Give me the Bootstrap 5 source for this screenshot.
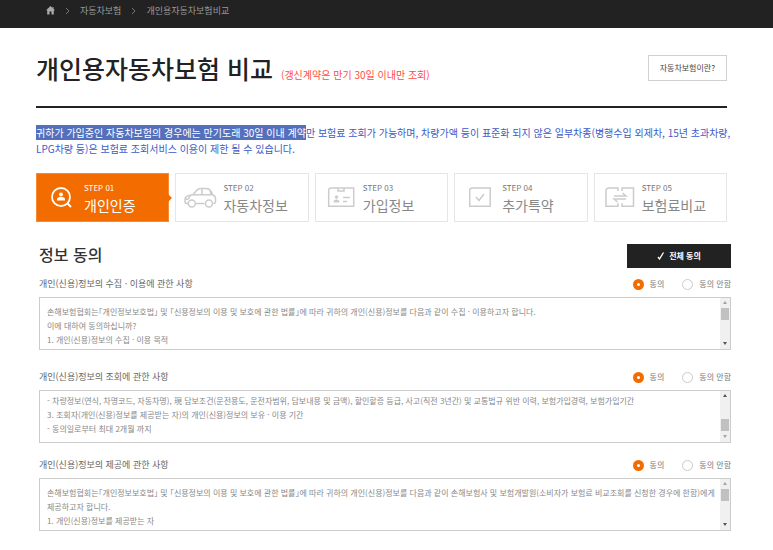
<!DOCTYPE html>
<html lang="ko">
<head>
<meta charset="utf-8">
<meta name="viewport" content="width=device-width, initial-scale=1">
<title>개인용자동차보험 비교</title>
<link href="https://cdn.jsdelivr.net/npm/bootstrap@5.3.0/dist/css/bootstrap.min.css" rel="stylesheet">
<style>
body{font-family:"Noto Sans CJK KR",sans-serif;font-size:8px;line-height:14px;color:#888;background:#fff}
a{text-decoration:none}
.topbar{background:#222;height:28px;padding:0 46px 7px;font-size:9px}
.topbar a{color:#999}
.topbar ol{gap:10px}
.page-main{padding:0 46px 0 36px}
.title-row{height:80px;border-bottom:2px solid #222;padding-top:2px}
.title-row h1{font-size:25px;line-height:40px;font-weight:500;color:#222}
.title-note{font-size:10px;color:#ff4b43}
.about-btn{border:1px solid #d0d0d0;border-radius:0;font-size:8px;line-height:14px;color:#444;padding:5px 11px}
.notice{font-size:10px;line-height:16px;color:#3c5bc8;margin:17px -6px 16px 0;word-break:keep-all}
.notice mark{background:#5470bd;color:#fff;padding:0}
.steps{gap:6px}
.step{height:49px;border:1px solid #e6e6e6;color:#888;position:relative}
.step svg{width:36px;height:24px;flex:none;fill:none;stroke:#ccc;stroke-width:1.5}
.step{padding:0 6px 0 7px;gap:4px}
.step small{font-size:8px;line-height:14px;color:#777}
.step strong{font-size:14px;line-height:20px;font-weight:400;white-space:nowrap}
.step.current{background:#f26c00;border-color:#f58b36;color:#fff}
.step.current small{color:#fff}
.step.current svg{stroke:#fff}
.step.current::after{content:"";position:absolute;left:100%;top:50%;margin-top:-4px;border:4px solid transparent;border-left-color:#f26c00;border-right:0}
.agreements{padding:22px 0 0 3px;margin-right:-4px}
.agreements h2{font-size:16px;line-height:20px;font-weight:500;color:#333}
.all-btn{width:104px;height:24px;background:#222;color:#fff;border:0;border-radius:0;font-size:8px;line-height:14px;font-weight:700;padding:0}
.all-btn:hover{background:#000;color:#fff}
.consent{margin-bottom:18px}
.consent:first-of-type{margin-top:7px}
.consent-scrolled{margin-bottom:13px}
.consent-head{height:18px;margin-bottom:4px}
.consent-head h3{font-size:9px;line-height:14px;font-weight:400;color:#666}
.choices{gap:18px}
.choices label{gap:6px;color:#777}
.choices input{appearance:none;width:11px;height:11px;margin:0;border:1px solid #ccc;border-radius:50%;background:#fff}
.choices input:checked{border:4px solid #f26c00}
.terms{height:53px;border:1px solid #ccc;overflow:hidden}
.terms-text{padding:7px 0 0 7px;height:51px;overflow:hidden;color:#888;font-feature-settings:"halt"}
.consent-scrolled .terms-text{padding-top:3px}
.scroll{width:10px;background:#f0f0f0;padding:3px 1px 4px;flex:none}
.scroll i{display:block;border:2px solid transparent;border-top:0;border-bottom:3px solid #555;width:4px}
.scroll i:last-child{border-top:3px solid #555;border-bottom:0}
.scroll b{display:block;width:8px;height:12px;background:#c1c1c1}
.scroll .idle{opacity:.5}
</style>
<script src="https://cdn.jsdelivr.net/npm/bootstrap@5.3.0/dist/js/bootstrap.bundle.min.js"></script>
</head>
<body>
<nav class="topbar d-flex align-items-center" aria-label="경로">
  <ol class="list-unstyled d-flex align-items-center m-0">
    <li class="d-flex"><a href="#" class="d-flex" aria-label="홈"><svg width="9" height="9" viewBox="0 0 9 9" fill="#aaa"><path d="M4.500 0 0 4.300h1.200V8.500h2.300V5.500h2v3h2.300V4.300H9L7.500 2.800V1h-1v.9z"/></svg></a></li>
    <li class="d-flex"><svg width="5" height="8" viewBox="0 0 5 8" fill="none" stroke="#777"><path d="m1 1 3 3-3 3"/></svg></li>
    <li><a href="#">자동차보험</a></li>
    <li class="d-flex"><svg width="5" height="8" viewBox="0 0 5 8" fill="none" stroke="#777"><path d="m1 1 3 3-3 3"/></svg></li>
    <li><a href="#">개인용자동차보험비교</a></li>
  </ol>
</nav>
<main class="page-main">
  <header class="title-row d-flex align-items-center justify-content-between">
    <div class="d-flex align-items-baseline">
      <h1 class="m-0">개인용자동차보험 비교</h1>
      <span class="title-note ms-2">(갱신계약은 만기 30일 이내만 조회)</span>
    </div>
    <button type="button" class="btn about-btn">자동차보험이란?</button>
  </header>
  <p class="notice"><mark>귀하가 가입중인 자동차보험의 경우에는 만기도래 30일 이내 계약</mark>만 보험료 조회가 가능하며, 차량가액 등이 표준화 되지 않은 일부차종(병행수입 외제차, 15년 초과차량, LPG차량 등)은 보험료 조회서비스 이용이 제한 될 수 있습니다.</p>

  <ol class="steps list-unstyled d-flex m-0">
    <li class="step current col d-flex align-items-center">
      <svg viewBox="0 0 36 24"><circle cx="17" cy="11" r="9" stroke-width="1.800"/><path d="m23 17 4 4" stroke-width="2"/><circle cx="17" cy="8.500" r="2" fill="#fff" stroke="none"/><path d="M13 14.500v-1c0-2 1.500-2.500 4-2.500s4 .5 4 2.500v1z" fill="#fff" stroke="none"/></svg>
      <div class="d-flex flex-column"><small>STEP 01</small><strong>개인인증</strong></div>
    </li>
    <li class="step col d-flex align-items-center">
      <svg viewBox="0 0 36 24"><path d="M5 17.500H3.500Q2 17.500 2 15.500v-2q0-3 4-4l4-.8 3.500-4.200Q15 2.500 18 2.500h5q3 0 4.500 2L30 9q2.500 1 2.500 4v2.500q0 2-2 2M12.500 17.500h9M10 8.700h20M19 2.500v6M27 3.500l1 5M3 13q3 1 4-3"/><circle cx="8.800" cy="17.500" r="3.500"/><circle cx="26" cy="17.500" r="3.500"/></svg>
      <div class="d-flex flex-column"><small>STEP 02</small><strong>자동차정보</strong></div>
    </li>
    <li class="step col d-flex align-items-center">
      <svg viewBox="0 0 36 24"><path d="M5.700 20.300V4.500q0-2.500 2.500-2.500h22.500v18.300zM15 2v3h6V2M20 11.500h7M20 15.500h4"/><circle cx="13.500" cy="11" r="1.700" fill="#ccc" stroke="none"/><path d="M10.500 16.500q0-3 3-3t3 3z" fill="#ccc" stroke="none"/></svg>
      <div class="d-flex flex-column"><small>STEP 03</small><strong>가입정보</strong></div>
    </li>
    <li class="step col d-flex align-items-center">
      <svg viewBox="0 0 36 24"><path d="M7.700 20.300V4.500q0-2.500 2.500-2.500h18v18.300zM14 11l3 3.500L22 8"/></svg>
      <div class="d-flex flex-column"><small>STEP 04</small><strong>추가특약</strong></div>
    </li>
    <li class="step col d-flex align-items-center">
      <svg viewBox="0 0 36 24"><path d="M16 5V2H7.500Q4 2 4 5v15.300h12v-3M20 5V2h11.500v18.300H20v-3M12 10h12l-3.500-3M24 13H12l3.500 3"/></svg>
      <div class="d-flex flex-column"><small>STEP 05</small><strong>보험료비교</strong></div>
    </li>
  </ol>

  <section class="agreements">
    <div class="d-flex align-items-start justify-content-between">
      <h2 class="m-0">정보 동의</h2>
      <button type="button" class="btn all-btn d-flex align-items-center justify-content-center gap-1"><svg width="8" height="8" viewBox="0 0 8 8" fill="none" stroke="#fff" stroke-width="1.300"><path d="m1 5 1.500 2L6.500.5"/></svg>전체 동의</button>
    </div>

    <article class="consent">
      <div class="consent-head d-flex align-items-center justify-content-between">
        <h3 class="m-0">개인(신용)정보의 수집 · 이용에 관한 사항</h3>
        <div class="choices d-flex">
          <label class="d-flex align-items-center"><input type="radio" name="collect" checked>동의</label>
          <label class="d-flex align-items-center"><input type="radio" name="collect">동의 안함</label>
        </div>
      </div>
      <div class="terms d-flex">
        <div class="terms-text flex-grow-1" tabindex="0">손해보험협회는「개인정보보호법」 및 「신용정보의 이용 및 보호에 관한 법률」에 따라 귀하의 개인(신용)정보를 다음과 같이 수집 · 이용하고자 합니다.<br>이에 대하여 동의하십니까?<br>1. 개인(신용)정보의 수집 · 이용 목적</div>
        <div class="scroll d-flex flex-column align-items-center" aria-hidden="true"><i class="idle"></i><b class="mt-1 mb-auto"></b><i></i></div>
      </div>
    </article>

    <article class="consent consent-scrolled">
      <div class="consent-head d-flex align-items-center justify-content-between">
        <h3 class="m-0">개인(신용)정보의 조회에 관한 사항</h3>
        <div class="choices d-flex">
          <label class="d-flex align-items-center"><input type="radio" name="inquiry" checked>동의</label>
          <label class="d-flex align-items-center"><input type="radio" name="inquiry">동의 안함</label>
        </div>
      </div>
      <div class="terms d-flex">
        <div class="terms-text flex-grow-1" tabindex="0">- 차량정보(연식, 차명코드, 자동차명), 現 담보조건(운전용도, 운전자범위, 담보내용 및 금액), 할인할증 등급, 사고(직전 3년간) 및 교통법규 위반 이력, 보험가입경력, 보험가입기간<br>3. 조회자(개인(신용)정보를 제공받는 자)의 개인(신용)정보의 보유 · 이용 기간<br>- 동의일로부터 최대 2개월 까지</div>
        <div class="scroll d-flex flex-column align-items-center" aria-hidden="true"><i></i><b class="mt-auto mb-1"></b><i class="idle"></i></div>
      </div>
    </article>

    <article class="consent">
      <div class="consent-head d-flex align-items-center justify-content-between">
        <h3 class="m-0">개인(신용)정보의 제공에 관한 사항</h3>
        <div class="choices d-flex">
          <label class="d-flex align-items-center"><input type="radio" name="provide" checked>동의</label>
          <label class="d-flex align-items-center"><input type="radio" name="provide">동의 안함</label>
        </div>
      </div>
      <div class="terms d-flex">
        <div class="terms-text flex-grow-1" tabindex="0">손해보험협회는「개인정보보호법」 및 「신용정보의 이용 및 보호에 관한 법률」에 따라 귀하의 개인(신용)정보를 다음과 같이 손해보험사 및 보험개발원(소비자가 보험료 비교조회를 신청한 경우에 한함)에게 제공하고자 합니다.<br>1. 개인(신용)정보를 제공받는 자</div>
        <div class="scroll d-flex flex-column align-items-center" aria-hidden="true"><i class="idle"></i><b class="mt-1 mb-auto"></b><i></i></div>
      </div>
    </article>
  </section>
</main>
</body>
</html>
